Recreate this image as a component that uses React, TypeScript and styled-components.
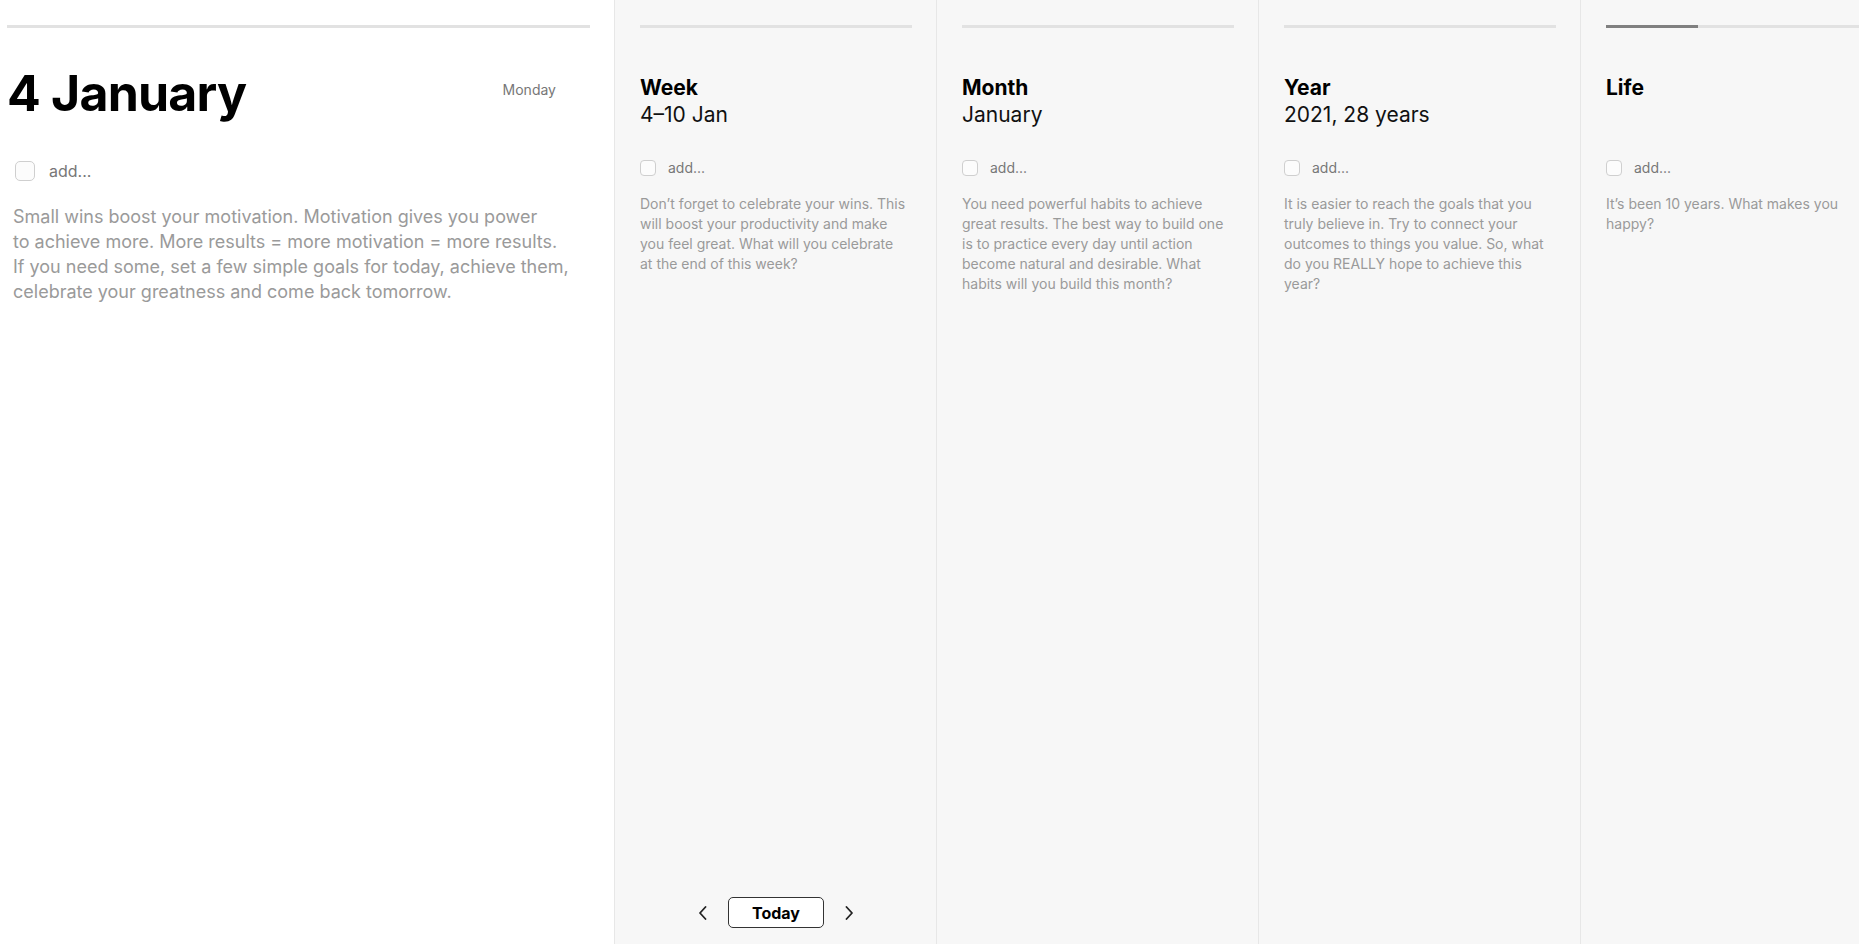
import React from "react";
import styled, { createGlobalStyle } from "styled-components";

const GlobalStyle = createGlobalStyle`
  html, body {
    margin: 0;
    padding: 0;
    height: 100%;
    overflow: hidden;
    background: #f7f7f7;
    font-family: Inter, "Noto Sans", "Liberation Sans", sans-serif;
  }
  #root {
    height: 100%;
  }
`;

const Board = styled.main`
  display: flex;
  height: 100vh;
  width: 100vw;
  overflow: hidden;
`;

const DayPanel = styled.section`
  flex: 0 0 614px;
  box-sizing: border-box;
  padding: 25px 24px 0 7px;
  background: #ffffff;
  display: flex;
  flex-direction: column;
`;

const Column = styled.section`
  flex: 0 0 322px;
  box-sizing: border-box;
  padding: 25px 24px 16px 25px;
  background: #f7f7f7;
  border-left: 1px solid #e7e7e7;
  display: flex;
  flex-direction: column;
`;

const Track = styled.div`
  height: 3px;
  background: #e2e2e2;
  overflow: hidden;
`;

const Fill = styled.div`
  height: 100%;
  background: #808080;
`;

const DayHeader = styled.header`
  display: flex;
  justify-content: space-between;
  align-items: flex-start;
  margin-top: 35px;
  padding-right: 34px;
`;

const DayTitle = styled.h1`
  margin: 0;
  font-size: 50px;
  line-height: 60px;
  font-weight: 700;
  letter-spacing: -0.8px;
  color: #000;
`;

const Weekday = styled.span`
  margin-top: 18px;
  font-size: 14px;
  line-height: 17px;
  color: #777;
`;

const ColumnTitle = styled.h2`
  margin: 47px 0 0;
  font-size: 21px;
  line-height: 26px;
  font-weight: 700;
  color: #000;
`;

const ColumnSub = styled.div`
  min-height: 27px;
  font-size: 21px;
  line-height: 27px;
  color: #111;
`;

const TaskRow = styled.label<{ $big?: boolean }>`
  display: flex;
  align-items: center;
  gap: ${(p) => (p.$big ? "14px" : "12px")};
  margin: ${(p) => (p.$big ? "38px 0 0 8px" : "31px 0 0")};
  font-size: ${(p) => (p.$big ? "16px" : "14px")};
  color: #777;
  cursor: text;
`;

const Box = styled.span<{ $big?: boolean }>`
  box-sizing: border-box;
  width: ${(p) => (p.$big ? "20px" : "16px")};
  height: ${(p) => (p.$big ? "20px" : "16px")};
  border: 1px solid #cfcfcf;
  border-radius: ${(p) => (p.$big ? "5px" : "4px")};
  background: #fcfcfc;
  flex-shrink: 0;
`;

const Hint = styled.p<{ $big?: boolean }>`
  margin: ${(p) => (p.$big ? "23px 0 0 6px" : "18px 0 0")};
  padding-right: ${(p) => (p.$big ? "0" : "6px")};
  font-size: ${(p) => (p.$big ? "18px" : "14px")};
  line-height: ${(p) => (p.$big ? "25px" : "20px")};
  color: #9a9a9a;
`;

const Pager = styled.nav`
  margin-top: auto;
  display: flex;
  justify-content: center;
  align-items: center;
  gap: 20px;
`;

const Arrow = styled.button`
  border: 0;
  background: none;
  padding: 0;
  display: flex;
  color: #222;
  cursor: pointer;
`;

const TodayBtn = styled.button`
  width: 96px;
  height: 31px;
  box-sizing: border-box;
  border: 1px solid #333;
  border-radius: 5px;
  background: #fff;
  font-family: inherit;
  font-size: 16px;
  font-weight: 700;
  color: #000;
  cursor: pointer;
`;

const Chevron = ({ dir }: { dir: "left" | "right" }) => (
  <svg width="10" height="14" viewBox="0 0 10 14" fill="none">
    <path
      d={dir === "left" ? "M7.5 1 L2 7 L7.5 13" : "M2.5 1 L8 7 L2.5 13"}
      stroke="currentColor"
      strokeWidth="1.8"
      strokeLinecap="round"
      strokeLinejoin="round"
    />
  </svg>
);

type Period = {
  title: string;
  sub: string;
  hint: string;
  progress: number;
  pager?: boolean;
};

const periods: Period[] = [
  {
    title: "Week",
    sub: "4–10 Jan",
    hint: "Don’t forget to celebrate your wins. This will boost your productivity and make you feel great. What will you celebrate at the end of this week?",
    progress: 0,
    pager: true,
  },
  {
    title: "Month",
    sub: "January",
    hint: "You need powerful habits to achieve great results. The best way to build one is to practice every day until action become natural and desirable. What habits will you build this month?",
    progress: 0,
  },
  {
    title: "Year",
    sub: "2021, 28 years",
    hint: "It is easier to reach the goals that you truly believe in. Try to connect your outcomes to things you value. So, what do you REALLY hope to achieve this year?",
    progress: 0,
  },
  {
    title: "Life",
    sub: "",
    hint: "It’s been 10 years. What makes you happy?",
    progress: 34,
  },
];

const App = () => {
  return (
    <>
      <GlobalStyle />
      <Board>
        <DayPanel>
          <Track>
            <Fill style={{ width: "0%" }} />
          </Track>
          <DayHeader>
            <DayTitle>4 January</DayTitle>
            <Weekday>Monday</Weekday>
          </DayHeader>
          <TaskRow $big>
            <Box $big />
            <span>add...</span>
          </TaskRow>
          <Hint $big>
            Small wins boost your motivation. Motivation gives you power
            <br />
            to achieve more. More results = more motivation = more results.
            <br />
            If you need some, set a few simple goals for today, achieve them,
            <br />
            celebrate your greatness and come back tomorrow.
          </Hint>
        </DayPanel>

        {periods.map((p) => (
          <Column key={p.title}>
            <Track>
              <Fill style={{ width: `${p.progress}%` }} />
            </Track>
            <ColumnTitle>{p.title}</ColumnTitle>
            <ColumnSub>{p.sub}</ColumnSub>
            <TaskRow>
              <Box />
              <span>add...</span>
            </TaskRow>
            <Hint>{p.hint}</Hint>
            {p.pager && (
              <Pager>
                <Arrow aria-label="previous">
                  <Chevron dir="left" />
                </Arrow>
                <TodayBtn>Today</TodayBtn>
                <Arrow aria-label="next">
                  <Chevron dir="right" />
                </Arrow>
              </Pager>
            )}
          </Column>
        ))}
      </Board>
    </>
  );
};

export default App;
